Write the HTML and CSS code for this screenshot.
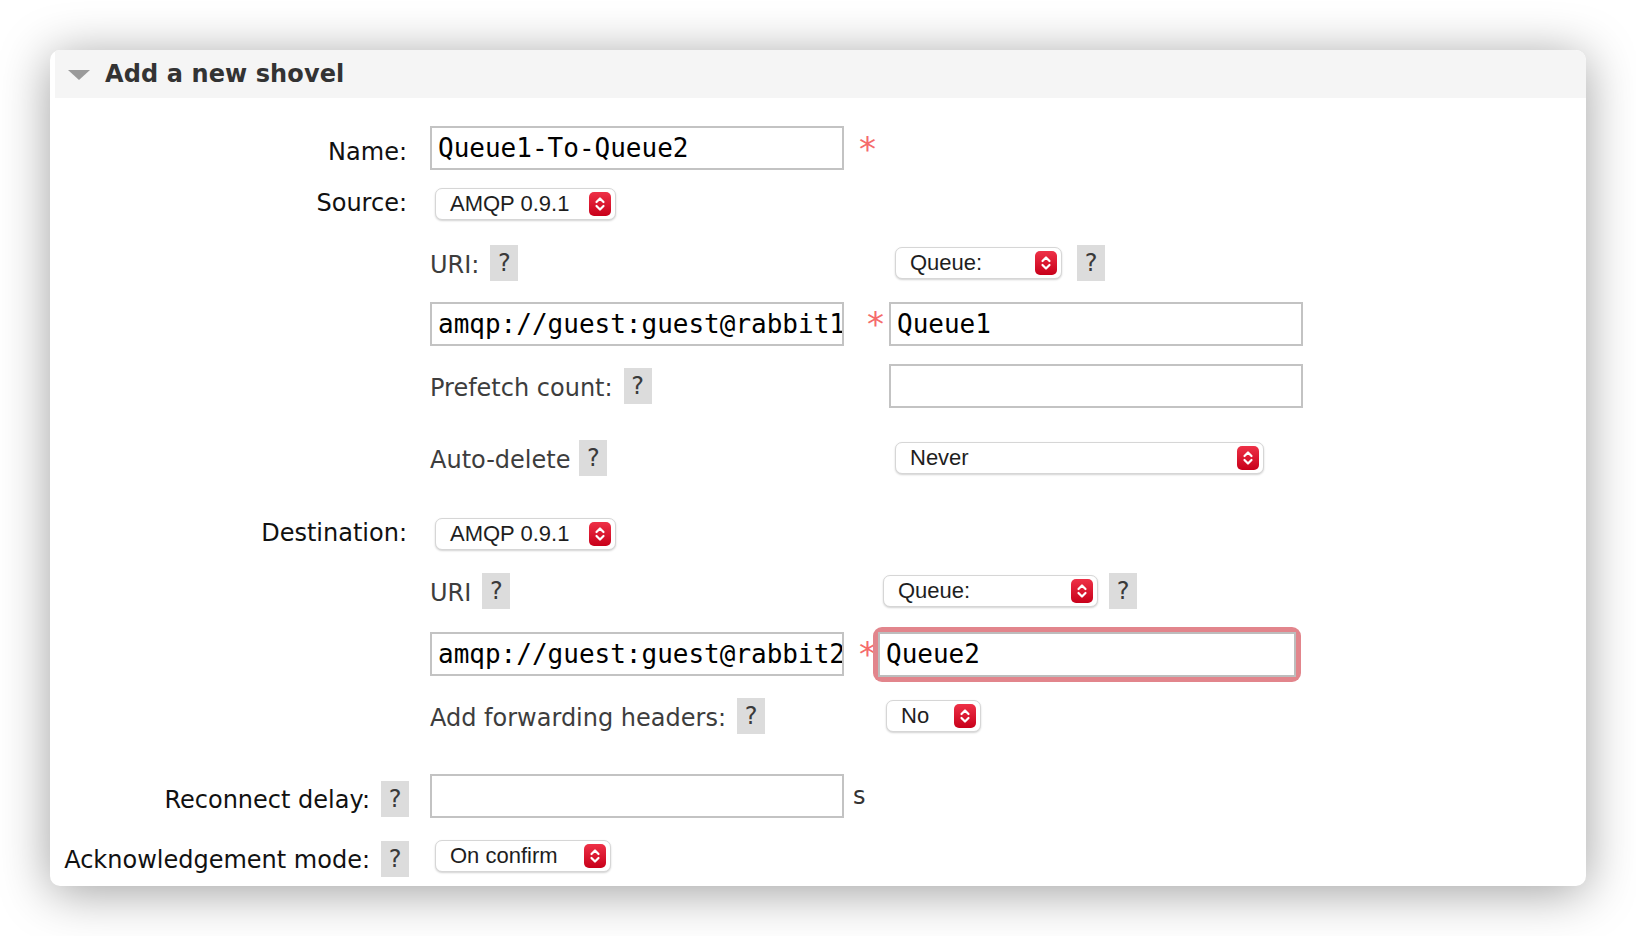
FILE: index.html
```html
<!DOCTYPE html>
<html lang="en">
<head>
<meta charset="utf-8">
<title>Add a new shovel</title>
<link rel="stylesheet" href="styles.css">
</head>
<body>
<div class="panel">
  <div class="panel-head">
    <span class="tri"></span>
    <h2>Add a new shovel</h2>
  </div>
  <div class="form">
    <div class="row h56">
      <div class="lab plain lab-name">Name:</div>
      <div class="val"><input class="txt" type="text" value="Queue1-To-Queue2"><span class="req req-name">*</span></div>
    </div>
    <div class="row h56">
      <div class="lab plain lab-up">Source:</div>
      <div class="val">
        <span class="sel sel-main w181"><span>AMQP 0.9.1</span><span class="step"><svg viewBox="0 0 22 24" width="22" height="24"><path d="M7.5 10 L11 6.5 L14.5 10 M7.5 14 L11 17.5 L14.5 14" fill="none" stroke="#fff" stroke-width="2.2" stroke-linecap="round" stroke-linejoin="round"/></svg></span></span>
      </div>
    </div>

    <div class="sub src">
      <div class="srow h61">
        <div class="ca"><span class="sublab">URI:</span><span class="help">?</span></div>
        <div class="cb"><span class="sel w167"><span>Queue:</span><span class="step"><svg viewBox="0 0 22 24" width="22" height="24"><path d="M7.5 10 L11 6.5 L14.5 10 M7.5 14 L11 17.5 L14.5 14" fill="none" stroke="#fff" stroke-width="2.2" stroke-linecap="round" stroke-linejoin="round"/></svg></span></span><span class="help help-q">?</span></div>
      </div>
      <div class="srow h62">
        <div class="ca"><input class="txt" type="text" value="amqp://guest:guest@rabbit1"><span class="req req-src">*</span></div>
        <div class="cb"><input class="txt" type="text" value="Queue1"></div>
      </div>
      <div class="srow h62">
        <div class="ca"><span class="sublab">Prefetch count:</span><span class="help">?</span></div>
        <div class="cb"><input class="txt" type="text" value=""></div>
      </div>
      <div class="srow h82">
        <div class="ca"><span class="sublab">Auto-delete</span><span class="help help-ad">?</span></div>
        <div class="cb"><span class="sel w369"><span>Never</span><span class="step"><svg viewBox="0 0 22 24" width="22" height="24"><path d="M7.5 10 L11 6.5 L14.5 10 M7.5 14 L11 17.5 L14.5 14" fill="none" stroke="#fff" stroke-width="2.2" stroke-linecap="round" stroke-linejoin="round"/></svg></span></span></div>
      </div>
    </div>

    <div class="row h70">
      <div class="lab plain lab-up">Destination:</div>
      <div class="val">
        <span class="sel sel-main w181"><span>AMQP 0.9.1</span><span class="step"><svg viewBox="0 0 22 24" width="22" height="24"><path d="M7.5 10 L11 6.5 L14.5 10 M7.5 14 L11 17.5 L14.5 14" fill="none" stroke="#fff" stroke-width="2.2" stroke-linecap="round" stroke-linejoin="round"/></svg></span></span>
      </div>
    </div>

    <div class="sub dst">
      <div class="srow h44">
        <div class="ca"><span class="sublab">URI</span><span class="help">?</span></div>
        <div class="cb"><span class="sel w215"><span>Queue:</span><span class="step"><svg viewBox="0 0 22 24" width="22" height="24"><path d="M7.5 10 L11 6.5 L14.5 10 M7.5 14 L11 17.5 L14.5 14" fill="none" stroke="#fff" stroke-width="2.2" stroke-linecap="round" stroke-linejoin="round"/></svg></span></span><span class="help">?</span></div>
      </div>
      <div class="srow h82">
        <div class="ca"><input class="txt" type="text" value="amqp://guest:guest@rabbit2"><span class="req req-dst">*</span></div>
        <div class="cb"><span class="ring"><input class="txt txt-focus" type="text" value="Queue2"></span></div>
      </div>
      <div class="srow h42">
        <div class="ca"><span class="sublab">Add forwarding headers:</span><span class="help">?</span></div>
        <div class="cb"><span class="sel w95"><span>No</span><span class="step"><svg viewBox="0 0 22 24" width="22" height="24"><path d="M7.5 10 L11 6.5 L14.5 10 M7.5 14 L11 17.5 L14.5 14" fill="none" stroke="#fff" stroke-width="2.2" stroke-linecap="round" stroke-linejoin="round"/></svg></span></span></div>
      </div>
    </div>

    <div class="row h60 gap-top">
      <div class="lab lab-help"><span class="lab-text">Reconnect delay:</span><span class="help help-rd">?</span></div>
      <div class="val"><input class="txt" type="text" value=""><span class="unit">s</span></div>
    </div>
    <div class="row h60">
      <div class="lab lab-help"><span class="lab-text">Acknowledgement mode:</span><span class="help help-ack">?</span></div>
      <div class="val">
        <span class="sel sel-main w176"><span>On confirm</span><span class="step"><svg viewBox="0 0 22 24" width="22" height="24"><path d="M7.5 10 L11 6.5 L14.5 10 M7.5 14 L11 17.5 L14.5 14" fill="none" stroke="#fff" stroke-width="2.2" stroke-linecap="round" stroke-linejoin="round"/></svg></span></span>
      </div>
    </div>
  </div>
</div>
</body>
</html>
```

FILE: styles.css
```css
html, body {
  margin: 0;
  padding: 0;
  background: #ffffff;
}

body {
  padding: 50px 50px 50px 50px;
  font-family: "DejaVu Sans", Verdana, sans-serif;
  font-size: 24px;
  color: #1a1a1a;
}

.panel {
  width: 1536px;
  height: 836px;
  box-sizing: border-box;
  background: #ffffff;
  border-radius: 10px;
  box-shadow: 0 6px 50px rgba(0, 0, 0, 0.38);
  overflow: hidden;
}

.panel-head {
  margin-left: 5px;
  height: 48px;
  background: #f5f5f5;
  display: flex;
  align-items: center;
  border-top-right-radius: 10px;
}

.tri {
  width: 0;
  height: 0;
  margin-left: 13px;
  border-left: 11px solid transparent;
  border-right: 11px solid transparent;
  border-top: 10px solid #9a9a9a;
  margin-top: 1px;
}

.panel-head h2 {
  margin: 0 0 0 15px;
  font-size: 24px;
  font-weight: bold;
  color: #333333;
  letter-spacing: 0.1px;
}

.form {
  padding-top: 22px;
}

.row {
  display: flex;
  align-items: center;
}

.h42 { height: 42px; }
.h44 { height: 44px; }
.h56 { height: 56px; }
.h60 { height: 60px; }
.h61 { height: 61px; }
.h62 { height: 62px; }
.h70 { height: 70px; }
.h82 { height: 82px; }

.gap-top { margin-top: 29px; }

.lab {
  width: 359px;
  display: flex;
  justify-content: flex-end;
  align-items: center;
  color: #111111;
  white-space: nowrap;
}

.lab.plain {
  padding-right: 2px;
  box-sizing: border-box;
}

.lab-name { padding-top: 8px; }
.lab-up { padding-bottom: 3px; }

.lab-help .lab-text { padding-top: 8px; }
.lab-help .help-ack { margin-top: 6px; }
.lab-help .help-rd { margin-top: 5px; }

.val {
  margin-left: 21px;
  display: flex;
  align-items: center;
}

.sub {
  margin-left: 380px;
}

.srow {
  display: flex;
  align-items: center;
}

.src .ca { width: 459px; }
.dst .ca { width: 449px; }

.ca, .cb {
  display: flex;
  align-items: center;
}

.src .cb .sel { margin-left: 6px; }
.dst .cb .sel { margin-left: 4px; }
.dst .cb .w95 { margin-left: 7px; }

.sublab {
  color: #3d3d3d;
  white-space: nowrap;
  padding-top: 4px;
}

.help {
  display: inline-flex;
  align-items: center;
  justify-content: center;
  width: 28px;
  height: 36px;
  margin-left: 11px;
  background: #dcdcdc;
  color: #3a3a3a;
  font-size: 24px;
}

.help-q { margin-left: 15px; }
.help-ad { margin-left: 9px; }

.txt {
  width: 414px;
  height: 44px;
  box-sizing: border-box;
  border: 2px solid #c3c3c3;
  border-radius: 0;
  padding: 0 0 0 6px;
  margin: 0;
  font-family: "DejaVu Sans Mono", Menlo, monospace;
  font-size: 26px;
  color: #000000;
  background: #ffffff;
  outline: none;
}

.ring {
  display: inline-block;
  padding: 5px;
  margin-left: -6px;
  border-radius: 9px;
  background: #e2858c;
  line-height: 0;
}

.txt-focus {
  width: 418px;
  height: 45px;
  border-color: #bdbdbd;
}

.req {
  color: #f56b6b;
  font-size: 34px;
  line-height: 34px;
  height: 34px;
  overflow: visible;
}

.req-name {
  margin-left: 15px;
  margin-top: 2px;
}

.req-src {
  margin-left: 23px;
}

.req-dst {
  margin-left: 15px;
}

.unit {
  margin-left: 9px;
  color: #333333;
}

.sel {
  display: inline-flex;
  align-items: center;
  justify-content: space-between;
  height: 32px;
  box-sizing: border-box;
  padding: 0 4px 0 14px;
  border: 1px solid #d6d6d6;
  border-radius: 7px;
  background: #ffffff;
  box-shadow: 0 1px 2px rgba(0, 0, 0, 0.18);
  font-family: "Liberation Sans", Arial, sans-serif;
  font-size: 22px;
  color: #1e1e1e;
  white-space: nowrap;
}

.sel-main { margin-left: 5px; }

.w95 { width: 95px; }
.w167 { width: 167px; }
.w176 { width: 176px; }
.w181 { width: 181px; }
.w215 { width: 215px; }
.w369 { width: 369px; }

.step {
  display: inline-flex;
  width: 22px;
  height: 24px;
  border-radius: 5px;
  background: linear-gradient(#ee3147, #c8001a);
}

.step svg {
  display: block;
}
```
